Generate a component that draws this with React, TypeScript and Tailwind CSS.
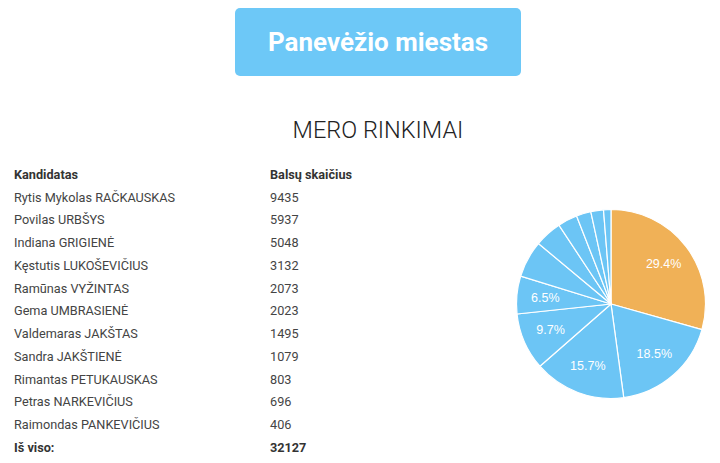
import React from "react";

const data: [string, number][] = [
  ["Rytis Mykolas RAČKAUSKAS", 9435],
  ["Povilas URBŠYS", 5937],
  ["Indiana GRIGIENĖ", 5048],
  ["Kęstutis LUKOŠEVIČIUS", 3132],
  ["Ramūnas VYŽINTAS", 2073],
  ["Gema UMBRASIENĖ", 2023],
  ["Valdemaras JAKŠTAS", 1495],
  ["Sandra JAKŠTIENĖ", 1079],
  ["Rimantas PETUKAUSKAS", 803],
  ["Petras NARKEVIČIUS", 696],
  ["Raimondas PANKEVIČIUS", 406],
];

function Pie() {
  const total = data.reduce((s, d) => s + d[1], 0);
  const cx = 100, cy = 100, r = 94.5;
  let acc = 0;
  const slices: React.ReactNode[] = [];
  const labels: React.ReactNode[] = [];
  data.forEach(([name, v], i) => {
    const a0 = (acc / total) * Math.PI * 2 - Math.PI / 2;
    acc += v;
    const a1 = (acc / total) * Math.PI * 2 - Math.PI / 2;
    const large = a1 - a0 > Math.PI ? 1 : 0;
    const x0 = cx + r * Math.cos(a0), y0 = cy + r * Math.sin(a0);
    const x1 = cx + r * Math.cos(a1), y1 = cy + r * Math.sin(a1);
    const d = `M${cx},${cy} L${x0},${y0} A${r},${r} 0 ${large} 1 ${x1},${y1} Z`;
    slices.push(
      <path key={name} d={d} fill={i === 0 ? "#f0b157" : "#6cc5f5"} stroke="#ffffff" strokeWidth={1.2} strokeLinejoin="round" />
    );
    const pct = (v / total) * 100;
    if (pct >= 6.4) {
      const am = (a0 + a1) / 2;
      const lr = 66;
      labels.push(
        <text
          key={name + "l"}
          x={cx + lr * Math.cos(am)}
          y={cy + lr * Math.sin(am)}
          fill="#ffffff"
          fontSize={12.5}
          textAnchor="middle"
          dominantBaseline="central"
          fontFamily="'Liberation Sans', Arial, sans-serif"
        >
          {pct.toFixed(1)}%
        </text>
      );
    }
  });
  return (
    <svg width={200} height={200} viewBox="0 0 200 200">
      {slices}
      {labels}
    </svg>
  );
}

export default function App() {
  const total = data.reduce((s, d) => s + d[1], 0);
  return (
    <div className="w-[720px] h-[463px] bg-white overflow-hidden" style={{ fontFamily: "Roboto, 'Liberation Sans', sans-serif" }}>
      <div className="flex justify-center pt-[8px] pl-[36px]">
        <div className="w-[286px] h-[68px] rounded-[5px] bg-[#6dc8f7] flex items-center justify-center text-white font-bold text-[26px]">
          Panevėžio miestas
        </div>
      </div>
      <div className="flex justify-center pl-[36px] mt-[36px] text-[23.5px] font-light text-[#222] leading-[36px]">
        MERO RINKIMAI
      </div>
      <div className="flex mt-[15px]">
        <div className="pl-[14px] w-[496px] text-[12.7px] text-[#444]">
          <div className="flex h-[22.75px] items-center font-bold text-[#333]">
            <div className="w-[256px]">Kandidatas</div>
            <div>Balsų skaičius</div>
          </div>
          {data.map(([n, v]) => (
            <div key={n} className="flex h-[22.75px] items-center">
              <div className="w-[256px]">{n}</div>
              <div>{v}</div>
            </div>
          ))}
          <div className="flex h-[22.75px] items-center font-bold text-[#333]">
            <div className="w-[256px]">Iš viso:</div>
            <div>{total}</div>
          </div>
        </div>
        <div className="mt-[41px] ml-[15px]">
          <Pie />
        </div>
      </div>
    </div>
  );
}
